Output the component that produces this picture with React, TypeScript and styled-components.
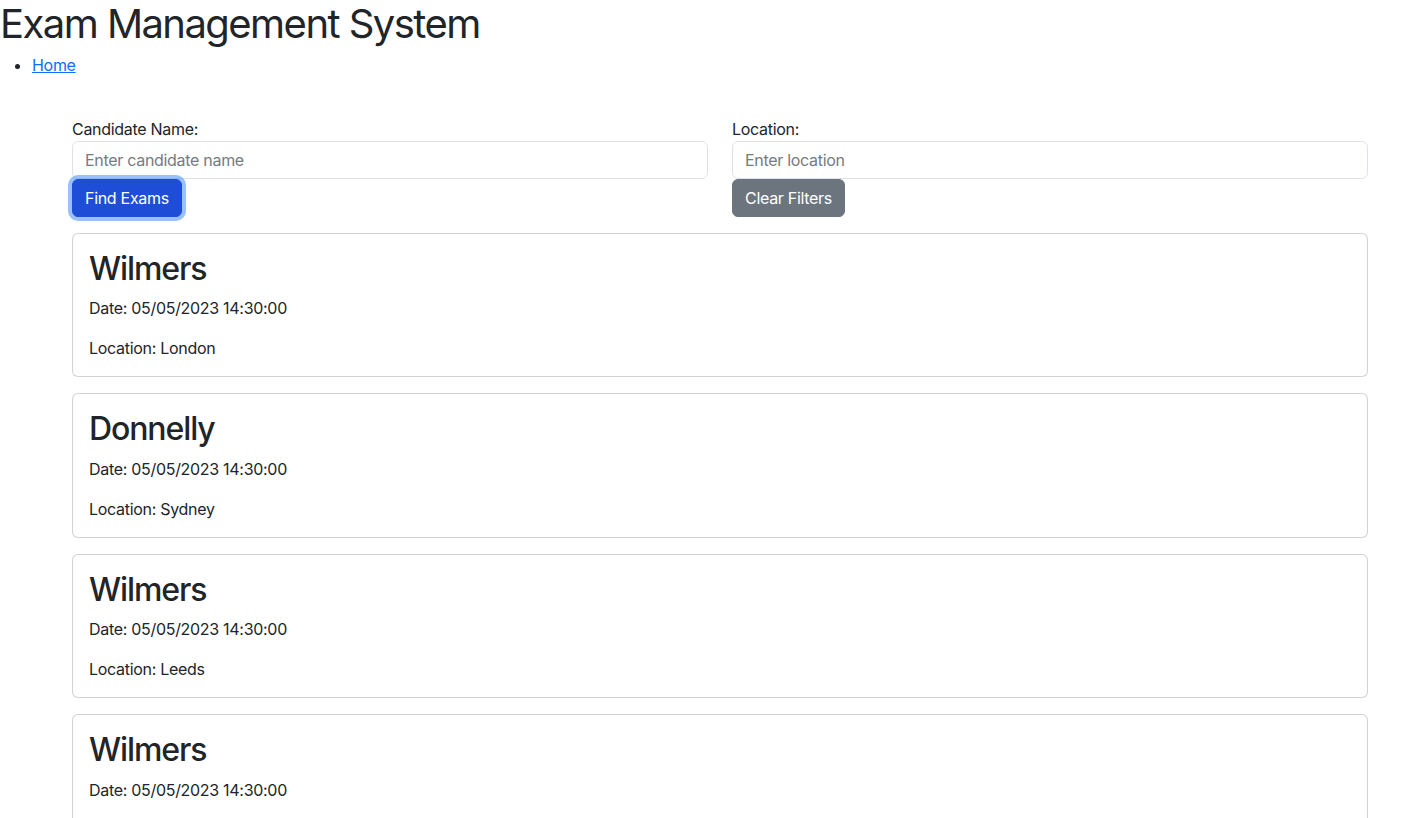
import React from "react";
import styled, { createGlobalStyle } from "styled-components";

const GlobalStyle = createGlobalStyle`
  *, *::before, *::after { box-sizing: border-box; }
  body {
    margin: 0;
    font-family: Inter, "Noto Sans", "Liberation Sans", sans-serif;
    font-size: 16px;
    line-height: 1.5;
    letter-spacing: -0.3px;
    color: #212529;
    background: #fff;
  }
`;

const Title = styled.h1`
  margin: 0 0 5px;
  font-size: 40px;
  font-weight: 400;
  line-height: 1.2;
  letter-spacing: -1.55px;
`;

const NavList = styled.ul`
  margin: 0;
  padding-left: 32px;
`;

const NavLink = styled.a`
  color: #0d6efd;
  text-decoration: underline;
`;

const Container = styled.div`
  width: 1320px;
  margin: 40px 0 0 60px;
  padding: 0 12px;
`;

const FilterRow = styled.form`
  display: grid;
  grid-template-columns: 1fr 1fr;
  column-gap: 24px;
  margin-bottom: 16px;
`;

const Field = styled.div`
  display: flex;
  flex-direction: column;
  align-items: flex-start;
`;

const Label = styled.label`
  display: block;
  line-height: 24px;
`;

const Input = styled.input`
  display: block;
  width: 100%;
  height: 38px;
  padding: 6px 12px;
  font: inherit;
  letter-spacing: inherit;
  color: #212529;
  border: 1px solid #dee2e6;
  border-radius: 6px;
  background: #fff;
  outline: none;
  &::placeholder { color: #757b82; }
`;

const Button = styled.button<{ $variant: "primary" | "secondary"; $focused?: boolean }>`
  height: 38px;
  padding: 6px 12px;
  font: inherit;
  letter-spacing: inherit;
  line-height: 24px;
  color: #fff;
  border: 1px solid ${(p) => (p.$variant === "primary" ? "#1e4dd8" : "#6c757d")};
  background: ${(p) => (p.$variant === "primary" ? "#1e4dd8" : "#6c757d")};
  border-radius: 6px;
  cursor: pointer;
  box-shadow: ${(p) => (p.$focused ? "0 0 0 4px rgba(49,132,253,0.5)" : "none")};
`;

const Card = styled.div`
  border: 1px solid rgba(0, 0, 0, 0.175);
  border-radius: 6px;
  padding: 16px;
  margin-bottom: 16px;
  background: #fff;
`;

const CardTitle = styled.h2`
  margin: 0 0 8px;
  font-size: 32px;
  font-weight: 500;
  line-height: 1.2;
  letter-spacing: -1.1px;
`;

const CardText = styled.p`
  margin: 0 0 16px;
  &:last-child { margin-bottom: 0; }
`;

const exams = [
  { name: "Wilmers", date: "05/05/2023 14:30:00", location: "London" },
  { name: "Donnelly", date: "05/05/2023 14:30:00", location: "Sydney" },
  { name: "Wilmers", date: "05/05/2023 14:30:00", location: "Leeds" },
  { name: "Wilmers", date: "05/05/2023 14:30:00", location: "Manchester" },
];

export default function App() {
  return (
    <>
      <GlobalStyle />
      <Title>Exam Management System</Title>
      <NavList>
        <li>
          <NavLink href="#">Home</NavLink>
        </li>
      </NavList>
      <Container>
        <FilterRow onSubmit={(e) => e.preventDefault()}>
          <Field>
            <Label htmlFor="candidate">Candidate Name:</Label>
            <Input id="candidate" placeholder="Enter candidate name" />
            <Button type="submit" $variant="primary" $focused>
              Find Exams
            </Button>
          </Field>
          <Field>
            <Label htmlFor="location">Location:</Label>
            <Input id="location" placeholder="Enter location" />
            <Button type="button" $variant="secondary">
              Clear Filters
            </Button>
          </Field>
        </FilterRow>
        {exams.map((exam, i) => (
          <Card key={i}>
            <CardTitle>{exam.name}</CardTitle>
            <CardText>Date: {exam.date}</CardText>
            <CardText>Location: {exam.location}</CardText>
          </Card>
        ))}
      </Container>
    </>
  );
}
